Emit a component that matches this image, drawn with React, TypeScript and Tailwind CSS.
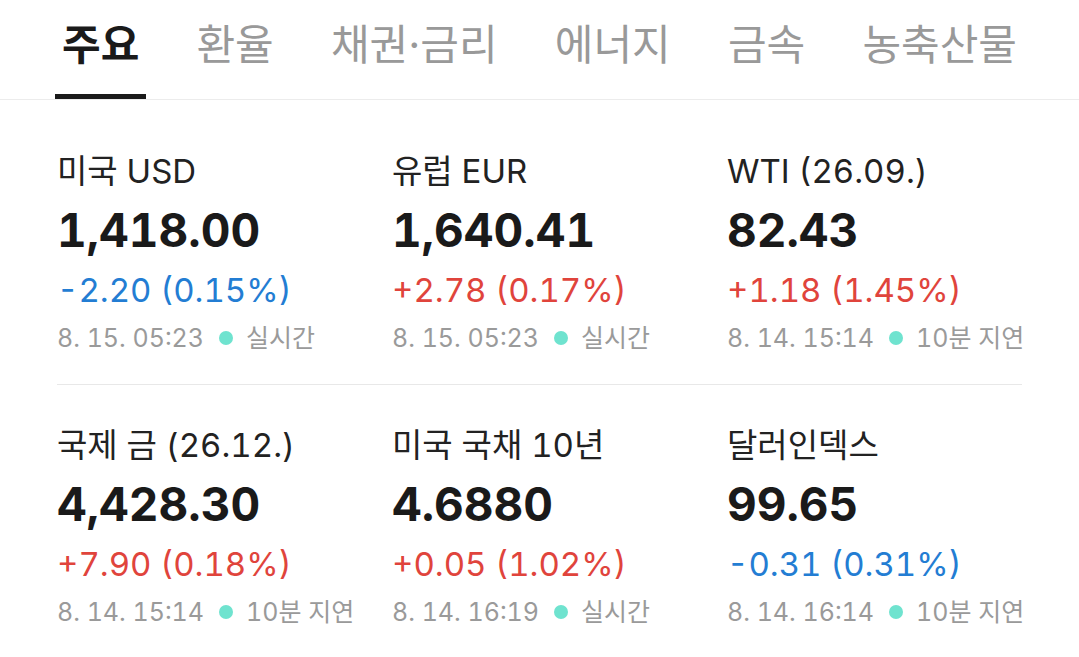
import React from "react";

type Quote = {
  name: string;
  value: string;
  change: string;
  up: boolean;
  time: string;
  status: string;
};

const tabs = ["주요", "환율", "채권·금리", "에너지", "금속", "농축산물"];

const rows: Quote[][] = [
  [
    { name: "미국 USD", value: "1,418.00", change: "-2.20 (0.15%)", up: false, time: "8. 15. 05:23", status: "실시간" },
    { name: "유럽 EUR", value: "1,640.41", change: "+2.78 (0.17%)", up: true, time: "8. 15. 05:23", status: "실시간" },
    { name: "WTI (26.09.)", value: "82.43", change: "+1.18 (1.45%)", up: true, time: "8. 14. 15:14", status: "10분 지연" },
  ],
  [
    { name: "국제 금 (26.12.)", value: "4,428.30", change: "+7.90 (0.18%)", up: true, time: "8. 14. 15:14", status: "10분 지연" },
    { name: "미국 국채 10년", value: "4.6880", change: "+0.05 (1.02%)", up: true, time: "8. 14. 16:19", status: "실시간" },
    { name: "달러인덱스", value: "99.65", change: "-0.31 (0.31%)", up: false, time: "8. 14. 16:14", status: "10분 지연" },
  ],
];

function QuoteCell({ q }: { q: Quote }) {
  return (
    <div className="min-w-0 whitespace-nowrap tabular-nums">
      <div className="text-[33px] leading-[59px] text-[#222222]">{q.name}</div>
      <div className="text-[46px] leading-[59px] font-bold text-[#1a1a1a]">{q.value}</div>
      <div className={`text-[33px] leading-[60px] ${q.up ? "text-[#e0443c]" : "text-[#237dd3]"}`}>
        {q.change}
      </div>
      <div className="flex items-center text-[25px] leading-[36px] text-[#9a9a9a]">
        <span>{q.time}</span>
        <span className="shrink-0 ml-[15px] mr-[13px] w-[14px] h-[14px] rounded-full bg-[#6fe3cf]" />
        <span>{q.status}</span>
      </div>
    </div>
  );
}

export default function App() {
  return (
    <div
      className="w-[1079px] h-[657px] bg-white overflow-hidden"
      style={{ fontFamily: 'Inter, "Noto Sans CJK KR", sans-serif' }}
    >
      <div className="flex justify-between px-[55px] border-b border-[#ececec]">
        {tabs.map((t, i) => (
          <div
            key={t}
            className={`h-[99px] px-[7px] pt-[22px] text-[42px] leading-[46px] border-b-[5px] ${
              i === 0 ? "border-[#1a1a1a] font-bold text-[#1a1a1a]" : "border-transparent text-[#999999]"
            }`}
          >
            {t}
          </div>
        ))}
      </div>

      <div className="px-[57px]">
        <div className="grid grid-cols-[293px_293px_1fr] gap-x-[42px] pt-[42px] pb-[28px]">
          {rows[0].map((q) => (
            <QuoteCell key={q.name} q={q} />
          ))}
        </div>
        <div className="grid grid-cols-[293px_293px_1fr] gap-x-[42px] pt-[31px] border-t border-[#e8e8e8]">
          {rows[1].map((q) => (
            <QuoteCell key={q.name} q={q} />
          ))}
        </div>
      </div>
    </div>
  );
}
